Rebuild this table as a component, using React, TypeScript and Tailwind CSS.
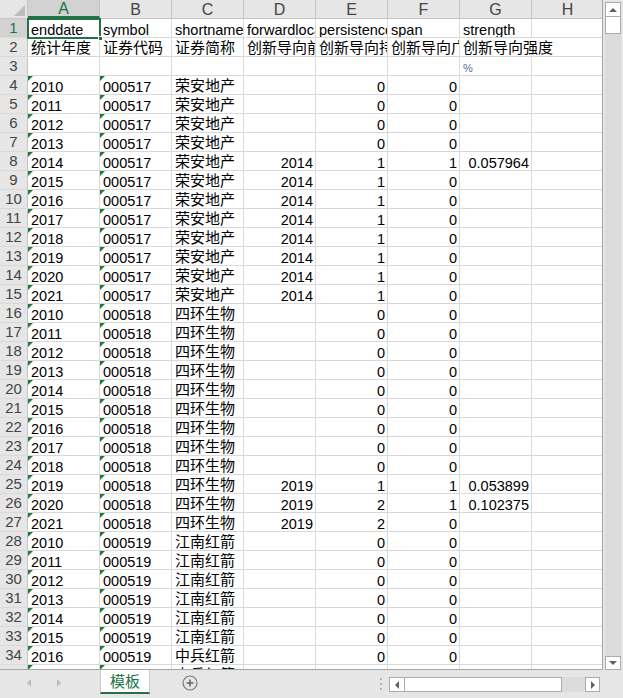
import React from "react";

const cols = ["A", "B", "C", "D", "E", "F", "G", "H"];

type Row = (string | number | null)[];

// rows 4..35 : enddate, symbol, shortname, forwardloc, persistence, span, strength
const data: Row[] = [];
for (let i = 0; i < 12; i++) {
  const y = 2010 + i;
  data.push([
    String(y),
    "000517",
    "荣安地产",
    y >= 2014 ? 2014 : null,
    y >= 2014 ? 1 : 0,
    y === 2014 ? 1 : 0,
    y === 2014 ? "0.057964" : null,
  ]);
}
for (let i = 0; i < 12; i++) {
  const y = 2010 + i;
  data.push([
    String(y),
    "000518",
    "四环生物",
    y >= 2019 ? 2019 : null,
    y === 2019 ? 1 : y > 2019 ? 2 : 0,
    y === 2019 || y === 2020 ? 1 : 0,
    y === 2019 ? "0.053899" : y === 2020 ? "0.102375" : null,
  ]);
}
for (let i = 0; i < 8; i++) {
  const y = 2010 + i;
  data.push([String(y), "000519", y >= 2016 ? "中兵红箭" : "江南红箭", null, 0, 0, null]);
}

const hasCjk = (s: string) => /[\u4e00-\u9fff]/.test(s);

function Cell({
  value,
  right,
  flag,
  spill,
  small,
}: {
  value?: string | number | null;
  right?: boolean;
  flag?: boolean;
  spill?: boolean;
  small?: boolean;
}) {
  const text = value === null || value === undefined ? "" : String(value);
  return (
    <div
      className={`relative w-[72px] shrink-0 h-full border-r flex items-end whitespace-nowrap ${
        spill ? "overflow-visible z-10 border-white" : "overflow-hidden border-[#d9d9d9]"
      } ${right ? "justify-end pr-[2px]" : "pl-[3px]"}`}
    >
      {flag && (
        <div className="absolute left-0 top-0 w-0 h-0 border-t-[5px] border-r-[5px] border-t-[#1e7b3a] border-r-transparent" />
      )}
      <span
        className={`${
          small
            ? "text-[11px] text-[#5a6c8c] leading-[13px]"
            : hasCjk(text)
            ? "text-[15px] leading-[16px] text-black"
            : "text-[14.5px] leading-[14px] text-black"
        }`}
      >
        {text}
      </span>
    </div>
  );
}

function RowHead({ n, active }: { n: number; active?: boolean }) {
  return (
    <div
      className={`w-[28px] shrink-0 h-full border-r flex items-center justify-center text-[15px] pt-[1px] ${
        active ? "bg-[#d2d2d2] text-[#217346] border-[#217346]" : "bg-[#e6e6e6] text-[#444] border-[#c4c4c4]"
      }`}
    >
      {n}
    </div>
  );
}

export default function App() {
  return (
    <div className="w-[623px] h-[698px] bg-[#e6e6e6] overflow-hidden font-['Liberation_Sans','Noto_Sans_CJK_SC',sans-serif] select-none">
      <div className="flex h-[670px]">
        {/* sheet grid */}
        <div className="relative w-[603px] h-full bg-white overflow-hidden border-r border-b border-[#a6a6a6]">
          {/* column headers */}
          <div className="flex h-[19px] border-b border-[#c4c4c4] bg-[#e6e6e6]">
            <div className="relative w-[28px] shrink-0 h-full border-r border-[#c4c4c4]">
              <div className="absolute right-[2px] bottom-[2px] w-0 h-0 border-b-[11px] border-l-[11px] border-b-[#bdbdbd] border-l-transparent" />
            </div>
            {cols.map((c) => (
              <div
                key={c}
                className={`w-[72px] shrink-0 h-full border-r border-[#c4c4c4] flex items-center justify-center text-[16px] pt-[1px] ${
                  c === "A" ? "bg-[#d2d2d2] text-[#217346] border-b-2 border-b-[#217346]" : "text-[#444]"
                }`}
              >
                {c}
              </div>
            ))}
          </div>

          {/* row 1 */}
          <div className="flex h-[19px] border-b border-[#d9d9d9]">
            <RowHead n={1} active />
            <Cell value="enddate" />
            <Cell value="symbol" />
            <Cell value="shortname" />
            <Cell value="forwardlocation" />
            <Cell value="persistence" />
            <Cell value="span" />
            <Cell value="strength" />
            <Cell />
          </div>
          {/* row 2 */}
          <div className="flex h-[19px] border-b border-[#d9d9d9]">
            <RowHead n={2} />
            <Cell value="统计年度" />
            <Cell value="证券代码" />
            <Cell value="证券简称" />
            <Cell value="创新导向前瞻性" />
            <Cell value="创新导向持续性" />
            <Cell value="创新导向广度" />
            <Cell value="创新导向强度" spill />
            <Cell />
          </div>
          {/* row 3 */}
          <div className="flex h-[19px] border-b border-[#d9d9d9]">
            <RowHead n={3} />
            <Cell />
            <Cell />
            <Cell />
            <Cell />
            <Cell />
            <Cell />
            <Cell value="%" small />
            <Cell />
          </div>

          {data.map((r, i) => (
            <div key={i} className="flex h-[19px] border-b border-[#d9d9d9]">
              <RowHead n={i + 4} />
              <Cell value={r[0]} flag />
              <Cell value={r[1]} flag />
              <Cell value={r[2]} />
              <Cell value={r[3]} right />
              <Cell value={r[4]} right />
              <Cell value={r[5]} right />
              <Cell value={r[6]} right />
              <Cell />
            </div>
          ))}

          {/* active cell A1 */}
          <div className="absolute left-[27px] top-[18px] w-[74px] h-[21px] border-2 border-[#217346] pointer-events-none">
            <div className="absolute right-[-4px] bottom-[-4px] w-[5px] h-[5px] bg-[#217346] border border-white" />
          </div>
        </div>

        {/* vertical scrollbar */}
        <div className="w-[20px] h-full pl-[2px] pt-[2px]">
          <div className="w-[16px] h-full bg-[#dcdcdc] flex flex-col">
            <div className="h-[15px] bg-white border border-[#ababab] flex items-center justify-center">
              <div className="w-0 h-0 border-l-[4px] border-r-[4px] border-b-[4px] border-l-transparent border-r-transparent border-b-[#606060]" />
            </div>
            <div className="h-[17px] bg-white border border-t-0 border-[#ababab]" />
            <div className="flex-1" />
            <div className="h-[14px] bg-white border border-[#ababab] flex items-center justify-center">
              <div className="w-0 h-0 border-l-[4px] border-r-[4px] border-t-[4px] border-l-transparent border-r-transparent border-t-[#606060]" />
            </div>
          </div>
        </div>
      </div>

      {/* sheet tabs bar */}
      <div className="flex h-[28px] items-start">
        <div className="w-[100px] h-[26px] flex items-center pl-[27px] gap-[26px]">
          <div className="w-0 h-0 border-t-[4px] border-b-[4px] border-r-[4px] border-t-transparent border-b-transparent border-r-[#bdbdbd]" />
          <div className="w-0 h-0 border-t-[4px] border-b-[4px] border-l-[4px] border-t-transparent border-b-transparent border-l-[#bdbdbd]" />
        </div>
        <div className="w-[50px] h-[24px] bg-white border-x border-[#c8c8c8] border-b-2 border-b-[#217346] flex items-center justify-center text-[15px] leading-[16px] pt-[2px] text-[#217346]">
          模板
        </div>
        <div className="w-[80px] h-[26px] flex items-center justify-center">
          <svg width="16" height="16" viewBox="0 0 16 16">
            <circle cx="8" cy="8" r="7" fill="none" stroke="#7a7a7a" strokeWidth="1.2" />
            <path d="M8 4.5v7M4.5 8h7" stroke="#666" strokeWidth="1.6" />
          </svg>
        </div>
        <div className="w-[143px]" />
        <div className="w-[16px] h-[26px] flex flex-col items-center justify-center gap-[3px] pt-[2px]">
          <div className="w-[2px] h-[2px] bg-[#b5b5b5]" />
          <div className="w-[2px] h-[2px] bg-[#b5b5b5]" />
          <div className="w-[2px] h-[2px] bg-[#b5b5b5]" />
        </div>
        <div className="mt-[7px] w-[211px] h-[15px] flex bg-[#dcdcdc]">
          <div className="w-[16px] h-full bg-white border border-[#ababab] flex items-center justify-center">
            <div className="w-0 h-0 border-t-[4px] border-b-[4px] border-r-[4px] border-t-transparent border-b-transparent border-r-[#606060]" />
          </div>
          <div className="w-[157px] h-full bg-white border border-l-0 border-[#ababab]" />
          <div className="flex-1" />
          <div className="w-[15px] h-full bg-white border border-[#ababab] flex items-center justify-center">
            <div className="w-0 h-0 border-t-[4px] border-b-[4px] border-l-[4px] border-t-transparent border-b-transparent border-l-[#606060]" />
          </div>
        </div>
      </div>
    </div>
  );
}
